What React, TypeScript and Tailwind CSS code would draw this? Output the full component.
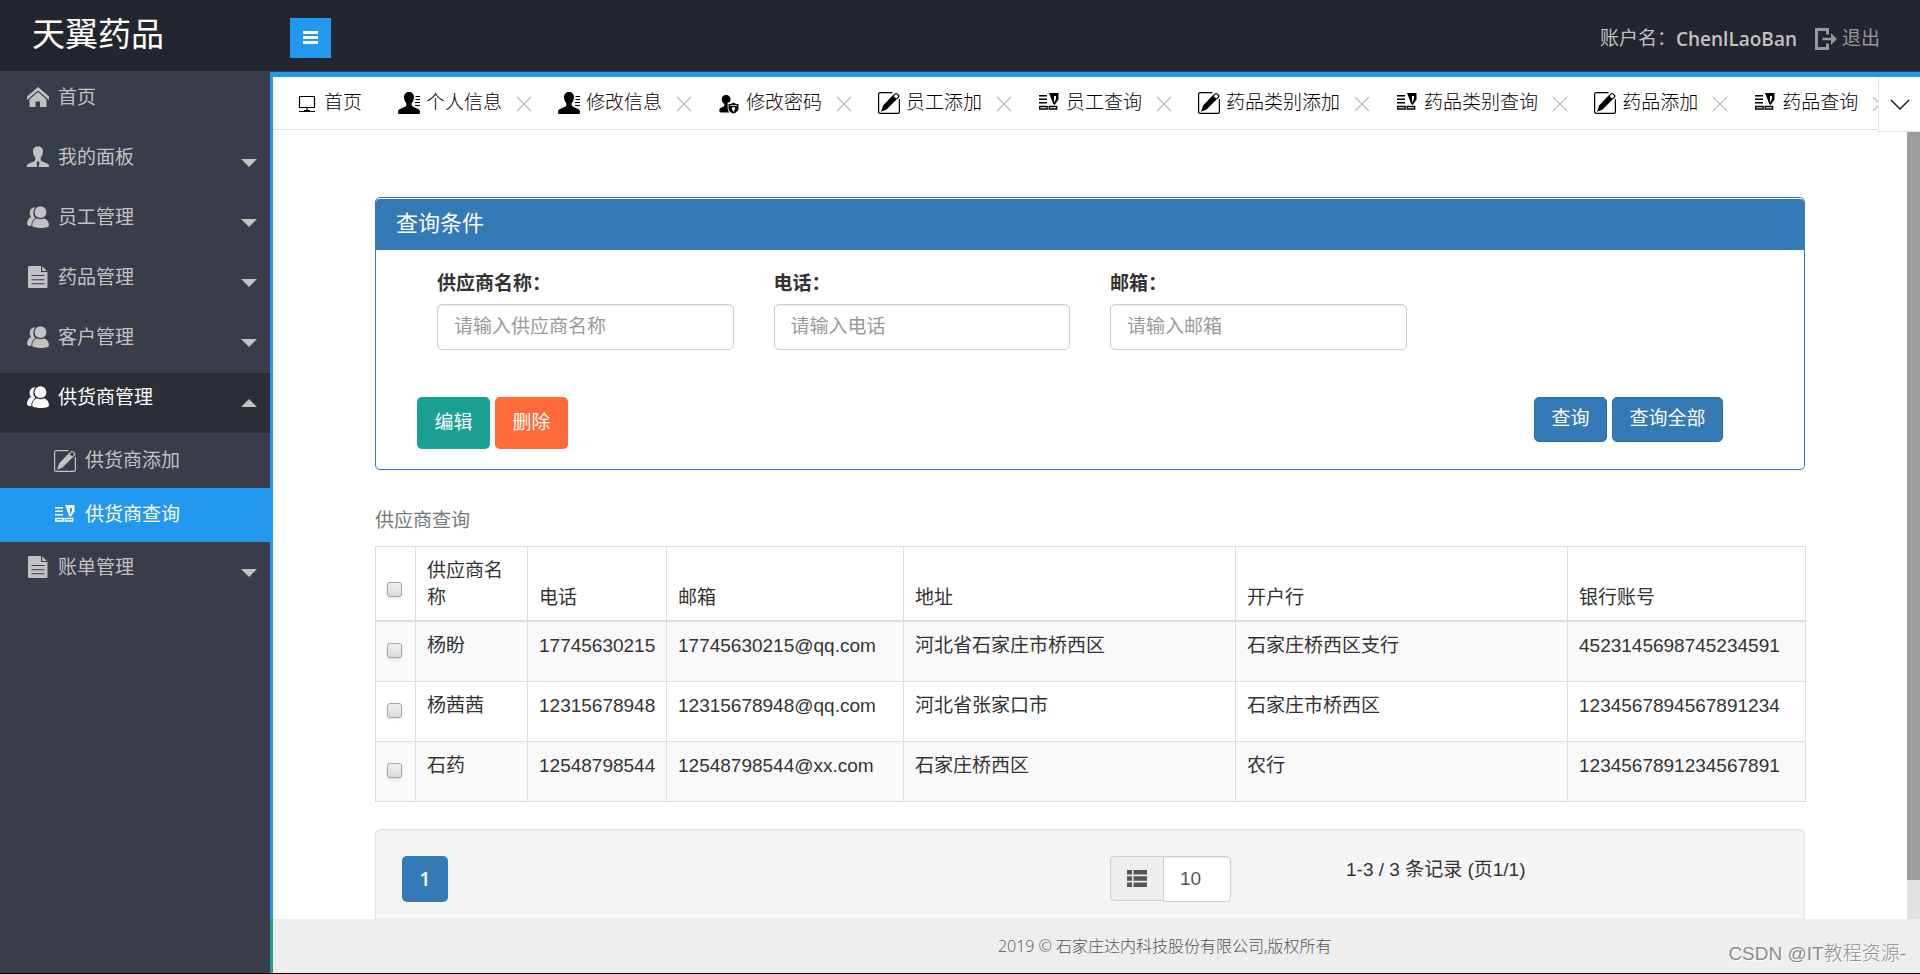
import React from "react";

interface IconProps {
  className?: string;
}

function HomeIcon({ className }: IconProps) {
  return (
    <svg className={className} viewBox="0 0 22 22" fill="currentColor" aria-hidden="true">
      <path d="M11 1 0 10.500V14l11-9.500L22 14v-3.500z" />
      <path d="M11 6 2.500 13.500V21H8.500v-5.500h4.500V21h6.500v-7.500z" />
    </svg>
  );
}

function UserIcon({ className }: IconProps) {
  return (
    <svg className={className} viewBox="0 0 22 22" fill="currentColor" aria-hidden="true">
      <path d="M11 .5c3.500 0 5 2 5 5 0 2.500-.8 4.600-2.300 5.700v2.300c0 1 .5 1.500 1.500 1.900l4.800 2c1.500.6 2 1.400 2 2.600v1H11.800l.6-4.500-1.400-1.500-1.400 1.500.6 4.500H0v-1c0-1.200.5-2 2-2.600l4.800-2c1-.4 1.500-.9 1.500-1.900v-2.300C6.800 10.100 6 8 6 5.500c0-3 1.500-5 5-5z" />
    </svg>
  );
}

function UsersIcon({ className }: IconProps) {
  return (
    <svg className={className} viewBox="0 0 22 22" fill="currentColor" aria-hidden="true">
      <path d="M7.600 1.500C4.500 1.500 2.600 4 2.600 7c0 1.600.5 2.900 1.500 3.900C1.500 12 0 14.500 0 18c0 1.200 1.500 2 4.200 2.200.2-3.900 1.700-6.600 4.300-8.100C7 10.800 6.300 9 6.300 6.800c0-2.100.7-4 2.300-5.200z" />
      <circle cx="13.500" cy="6.200" r="5.900" />
      <path d="M9.800 12.200c1.200.8 2.400 1.100 3.700 1.100s2.600-.3 3.800-1.100c3 1.200 4.700 3.800 4.700 7 0 1.800-3.500 2.800-8.300 2.800-5 0-8.500-1-8.500-2.800 0-3.200 1.700-5.800 4.600-7z" />
    </svg>
  );
}

function FileIcon({ className }: IconProps) {
  return (
    <svg className={className} viewBox="0 0 22 22" fill="currentColor" aria-hidden="true">
      <path
        fillRule="evenodd"
        d="M2.500 0H14v6h6.500v14.500c0 1-.5 1.500-1.500 1.500H2.500C1.500 22 1 21.500 1 20.500v-19C1 .5 1.500 0 2.500 0zM4.500 9v1h13V9zm0 4.200v1h13v-1zm0 4.100v1h13v-1z"
      />
      <path d="M15.200.3 20 4.900h-4.800z" />
    </svg>
  );
}

function EditIcon({ className }: IconProps) {
  return (
    <svg className={className} viewBox="0 0 22 22" aria-hidden="true">
      <path
        d="M14.500.6H2.500C1.200.6.600 1.200.600 2.500v17c0 1.300.6 1.900 1.900 1.900h17c1.300 0 1.900-.6 1.900-1.900V7"
        fill="none"
        stroke="currentColor"
        strokeWidth="1.200"
      />
      <path fill="currentColor" d="m14.800 3.300 4 4L8.600 17.500l-5.500 2.200 2-6.100z" />
      <path
        fill="none"
        stroke="currentColor"
        strokeWidth="1.200"
        d="m15.300 3.800 1.600-1.700c.8-.8 1.600-.8 2.400 0l.9.900c.8.800.8 1.600 0 2.400L18.500 7"
      />
    </svg>
  );
}

function QueryIcon({ className }: IconProps) {
  return (
    <svg className={className} viewBox="0 0 22 22" fill="currentColor" aria-hidden="true">
      <path d="M1 3h8v1.500H1zM1 6.500h8V8H1zM1 10h8v1.500H1z" />
      <path fillRule="evenodd" d="M11 1h9.500v6.500l-4 5.500-1.500-1.500L13 6zm5 3v4.500l.5 2L18 6.500V4z" />
      <path fill="none" stroke="currentColor" strokeWidth="1.300" d="M1.700 14.500h7.500V17H1.700zM11.200 14.500h7.500V17h-7.500z" />
    </svg>
  );
}

function MonitorIcon({ className }: IconProps) {
  return (
    <svg className={className} viewBox="0 0 18 18" fill="none" stroke="currentColor" aria-hidden="true">
      <path d="M1.500 1.500h15v11h-15zM9 12.500v4M1 16.500h16M6 15.500h6" strokeWidth="1.200" />
    </svg>
  );
}

function ProfileIcon({ className }: IconProps) {
  return (
    <svg className={className} viewBox="0 0 22 22" fill="currentColor" aria-hidden="true">
      <path d="M11 0c3.200 0 5 2 5 5 0 2.600-.9 4.700-2.300 6v2c0 1 .5 1.400 1.500 1.800l4.800 2.200c1.500.6 2 1.600 2 3 0 1.500-.3 2-1.500 2h-19C.300 22 0 21.500 0 20c0-1.400.5-2.400 2-3l4.800-2.200c1-.4 1.500-.8 1.500-1.800v-2C6.900 9.700 6 7.600 6 5c0-3 1.800-5 5-5z" />
      <path d="M17.500 4H22v1h-4.500zM17.500 7H22v1h-4.500zM17 10h5v1h-5zM17 13h5v1h-5z" />
    </svg>
  );
}

function PasswordIcon({ className }: IconProps) {
  return (
    <svg className={className} viewBox="0 0 22 22" fill="currentColor" aria-hidden="true">
      <path d="M8 3c2.900 0 4.500 1.700 4.500 4.200 0 1-.3 2-.8 2.800-1 .3-1.700.5-2 .8V16c0 2 .8 3.500 1.600 4.500H3c-1.200 0-1.700-.5-1.700-1.700 0-1.500.6-2.500 2-3.200l2-.9c.8-.4 1-.8 1-1.700v-1C5 11 3.700 9.400 3.700 7.200 3.700 4.700 5.300 3 8 3z" />
      <path
        fillRule="evenodd"
        d="M15.500 10.500c1.500 1 3 1.500 5 1.500v4.500c0 2.500-2 4-5 5-3-1-5-2.500-5-5V12c2 0 3.500-.5 5-1.500zm-3.500 2.800v.8h7v-.8zm3.500 1.700a1.600 1.600 0 0 0-.8 3v1.500h1.600V18a1.600 1.600 0 0 0-.8-3z"
      />
    </svg>
  );
}

function CloseIcon() {
  return (
    <svg className="h-4 w-4" viewBox="0 0 16 16" fill="none" stroke="#c2c2c2" strokeWidth="1.500" aria-hidden="true">
      <path d="m1 1 14 14M15 1 1 15" />
    </svg>
  );
}

const menuItems = [
  { id: "home", label: "首页", icon: HomeIcon },
  { id: "panel", label: "我的面板", icon: UserIcon, children: [] },
  { id: "staff", label: "员工管理", icon: UsersIcon, children: [] },
  { id: "drug", label: "药品管理", icon: FileIcon, children: [] },
  { id: "customer", label: "客户管理", icon: UsersIcon, children: [] },
  {
    id: "supplier",
    label: "供货商管理",
    icon: UsersIcon,
    children: [
      { id: "supplier-add", label: "供货商添加", icon: EditIcon },
      { id: "supplier-query", label: "供货商查询", icon: QueryIcon },
    ],
  },
  { id: "bill", label: "账单管理", icon: FileIcon, children: [] },
];

const tabs = [
  { label: "个人信息", icon: ProfileIcon },
  { label: "修改信息", icon: ProfileIcon },
  { label: "修改密码", icon: PasswordIcon },
  { label: "员工添加", icon: EditIcon },
  { label: "员工查询", icon: QueryIcon },
  { label: "药品类别添加", icon: EditIcon },
  { label: "药品类别查询", icon: QueryIcon },
  { label: "药品添加", icon: EditIcon },
  { label: "药品查询", icon: QueryIcon },
];

const fields = [
  { id: "name", label: "供应商名称：", placeholder: "请输入供应商名称" },
  { id: "phone", label: "电话：", placeholder: "请输入电话" },
  { id: "email", label: "邮箱：", placeholder: "请输入邮箱" },
];

const suppliers = [
  {
    name: "杨盼",
    phone: "17745630215",
    email: "17745630215@qq.com",
    address: "河北省石家庄市桥西区",
    bank: "石家庄桥西区支行",
    account: "4523145698745234591",
  },
  {
    name: "杨茜茜",
    phone: "12315678948",
    email: "12315678948@qq.com",
    address: "河北省张家口市",
    bank: "石家庄市桥西区",
    account: "1234567894567891234",
  },
  {
    name: "石药",
    phone: "12548798544",
    email: "12548798544@xx.com",
    address: "石家庄桥西区",
    bank: "农行",
    account: "1234567891234567891",
  },
];

const checkboxClass =
  "block h-[15px] w-[15px] appearance-none rounded-[3px] border border-[#a6a6a6] bg-linear-to-b from-[#f0f0f0] to-[#dadada] shadow-sm checked:bg-[#337ab7]";

function Header() {
  return (
    <header className="flex h-[72px] shrink-0 items-center border-b border-[#393d49] bg-[#23262e]">
      <h1 className="w-[290px] pb-[2px] pl-8 text-[33px] leading-10 text-white">天翼药品</h1>
      <button aria-label="菜单" className="mt-1 flex h-10 w-[41px] flex-col items-center justify-center gap-[2px] bg-[#2299ee]">
        <span className="h-[3px] w-[15px] bg-white" />
        <span className="h-[3px] w-[15px] bg-white" />
        <span className="h-[3px] w-[15px] bg-white" />
      </button>
      <div className="ml-auto flex items-center pr-10 pt-[6px] text-[19px] leading-7">
        <span className="text-[#c2c2c2]">账户名：</span>
        <span className="font-['Open_Sans','Noto_Sans_CJK_SC',sans-serif] font-semibold text-[#c2c2c2]">ChenlLaoBan</span>
        <a href="#logout" className="ml-[18px] flex items-center gap-[5px] text-[#989898]">
          <svg className="h-[22px] w-[22px]" viewBox="0 0 22 22" fill="currentColor" aria-hidden="true">
            <path d="M0 0h14v6.500h-3V3H3v16h8v-3.500h3V22H0z" />
            <path d="M7.500 9.700H16V5l6 6-6 6v-4.700H7.500z" />
          </svg>
          退出
        </a>
      </div>
    </header>
  );
}

function Sidebar() {
  const [openId, setOpenId] = React.useState("supplier");

  return (
    <nav className="w-[270px] shrink-0 bg-[#393d49] pt-px text-[19px] text-[#c2c2c2]">
      {menuItems.map((item) => {
        const Icon = item.icon;
        const isOpen = item.id === openId;
        return (
          <div key={item.id}>
            <button
              onClick={() => setOpenId(isOpen ? "" : item.id)}
              className={`flex h-[60px] w-full items-center pl-[27px] pr-[13px] text-left ${
                isOpen ? "bg-[#2b2e37] text-white" : ""
              }`}
            >
              <Icon className="mb-3 h-[22px] w-[22px]" />
              <span className="mb-[10px] ml-[9px] leading-7">{item.label}</span>
              {item.children && (
                <svg className="ml-auto h-2 w-4 text-[#c2c2c2]" viewBox="0 0 16 8" fill="currentColor" aria-hidden="true">
                  {isOpen ? <path d="M8 0 16 8H0z" /> : <path d="M0 0h16L8 8z" />}
                </svg>
              )}
            </button>

            {/* Sub menu */}
            {isOpen && (
              <div className="py-px">
                {item.children?.map((child) => {
                  const ChildIcon = child.icon;
                  return (
                    <a
                      key={child.id}
                      href={`#${child.id}`}
                      className={`flex h-[54px] items-center gap-[9px] pl-[54px] leading-7 ${
                        child.id === "supplier-query" ? "bg-[#2299ee] text-white" : ""
                      }`}
                    >
                      <ChildIcon className="h-[22px] w-[22px]" />
                      {child.label}
                    </a>
                  );
                })}
              </div>
            )}
          </div>
        );
      })}
    </nav>
  );
}

function TabBar() {
  return (
    <div className="relative h-[53px] shrink-0 border-b border-[#e2e2e2] bg-white text-[19px] font-light text-black">
      <div className="flex h-full items-center overflow-hidden pl-[25px] pt-px">
        <a href="#home" className="mr-9 flex shrink-0 items-center gap-2">
          <MonitorIcon className="h-[18px] w-[18px]" />
          首页
        </a>
        {tabs.map((tab) => {
          const Icon = tab.icon;
          return (
            <div key={tab.label} className="mr-[26px] flex shrink-0 items-center">
              <a href="#tab" className="flex items-center gap-[6px]">
                <Icon className="mb-[2px] h-[22px] w-[22px]" />
                {tab.label}
              </a>
              <button aria-label={`关闭${tab.label}`} className="ml-[14px]">
                <CloseIcon />
              </button>
            </div>
          );
        })}
      </div>
      <button
        aria-label="更多"
        className="absolute right-0 top-0 flex h-[55px] w-[42px] items-center justify-center border-b border-l border-[#e2e2e2] bg-white"
      >
        <svg className="h-[11px] w-5" viewBox="0 0 20 11" fill="none" stroke="#222" strokeWidth="1.500" aria-hidden="true">
          <path d="m1 1 9 9 9-9" />
        </svg>
      </button>
    </div>
  );
}

function SearchPanel() {
  return (
    <section className="rounded-[5px] border border-[#337ab7] pt-px shadow-xs">
      <h2 className="rounded-t-sm bg-[#337ab7] px-5 pb-3 pt-[11px] text-[22px] leading-7 text-white">查询条件</h2>
      <form className="px-[41px] pb-5 pt-5" onSubmit={(e) => e.preventDefault()}>
        <div className="grid grid-cols-4">
          {fields.map((field) => (
            <div key={field.id} className="px-5">
              <label htmlFor={field.id} className="mb-[7px] block text-[19px] font-bold leading-[27px]">
                {field.label}
              </label>
              <input
                id={field.id}
                type="text"
                placeholder={field.placeholder}
                className="block h-[46px] w-full rounded-[5px] border border-[#cccccc] px-4 text-[19px] shadow-[inset_0_1px_1px_rgba(0,0,0,0.08)] placeholder:text-[#999999]"
              />
            </div>
          ))}
        </div>
        <div className="mt-[47px] flex items-start gap-[5px] text-[19px] text-white">
          <button className="h-[52px] w-[73px] rounded-[5px] bg-[#1aa094]">编辑</button>
          <button className="h-[52px] w-[73px] rounded-[5px] bg-[#ff6a3a]">删除</button>
          <button className="ml-auto h-[45px] w-[73px] rounded-[5px] border border-[#2e6da4] bg-[#337ab7]">查询</button>
          <button className="mr-10 h-[45px] w-[111px] rounded-[5px] border border-[#2e6da4] bg-[#337ab7]">查询全部</button>
        </div>
      </form>
    </section>
  );
}

function SupplierTable() {
  const cell = "border border-[#dddddd] px-[11px] pt-[10px] pb-[22px] align-top";
  const head = "border border-b-2 border-[#dddddd] px-[11px] pt-[10px] pb-[9px] text-left align-bottom font-normal";

  return (
    <table className="w-full table-fixed border-collapse text-[19px] leading-[27px]">
      <caption className="pb-3 pt-[37px] text-left text-[#777777]">供应商查询</caption>
      <colgroup>
        <col className="w-[40px]" />
        <col className="w-[112px]" />
        <col className="w-[139px]" />
        <col className="w-[237px]" />
        <col className="w-[332px]" />
        <col className="w-[332px]" />
        <col className="w-[238px]" />
      </colgroup>
      <thead>
        <tr>
          <th className="border border-b-2 border-[#dddddd] px-[11px] pb-[23px] align-bottom">
            <input type="checkbox" aria-label="全选" className={checkboxClass} />
          </th>
          <th className={head}>供应商名称</th>
          <th className={head}>电话</th>
          <th className={head}>邮箱</th>
          <th className={head}>地址</th>
          <th className={head}>开户行</th>
          <th className={head}>银行账号</th>
        </tr>
      </thead>
      <tbody>
        {suppliers.map((row) => (
          <tr key={row.account} className="odd:bg-[#f9f9f9]">
            <td className="border border-[#dddddd] px-[11px] pt-[21px] align-top">
              <input type="checkbox" aria-label={row.name} className={checkboxClass} />
            </td>
            <td className={cell}>{row.name}</td>
            <td className={cell}>{row.phone}</td>
            <td className={cell}>{row.email}</td>
            <td className={cell}>{row.address}</td>
            <td className={cell}>{row.bank}</td>
            <td className={cell}>{row.account}</td>
          </tr>
        ))}
      </tbody>
    </table>
  );
}

function Pagination() {
  return (
    <div className="mt-[27px] grid grid-cols-2 rounded-[5px] border border-[#e3e3e3] bg-[#f5f5f5] px-[26px] py-[26px] text-[19px] shadow-[inset_0_1px_1px_rgba(0,0,0,0.05)]">
      <div>
        <button className="h-[46px] w-[46px] rounded-[5px] bg-[#337ab7] font-['Open_Sans',sans-serif] font-semibold text-white">
          1
        </button>
      </div>
      <div className="flex items-start pl-5">
        <label
          htmlFor="page-size"
          className="flex h-[45px] w-[53px] items-center justify-center rounded-l-[5px] border border-r-0 border-[#cccccc] bg-[#eeeeee]"
        >
          <svg className="h-[17px] w-5" viewBox="0 0 20 17" fill="#555555" aria-label="每页条数">
            <path d="M0 0h5v4.500H0zM6.500 0H20v4.500H6.500zM0 6.200h5v4.600H0zM6.500 6.200H20v4.600H6.500zM0 12.500h5V17H0zM6.500 12.500H20V17H6.500z" />
          </svg>
        </label>
        <input
          id="page-size"
          type="text"
          defaultValue="10"
          className="h-[46px] w-[68px] rounded-r-[5px] border border-[#cccccc] bg-white px-4 text-[#555555] shadow-[inset_0_1px_1px_rgba(0,0,0,0.08)]"
        />
        <p className="ml-[115px] leading-[27px]">1-3 / 3 条记录 (页1/1)</p>
      </div>
    </div>
  );
}

export default function App() {
  return (
    <div className="flex h-screen flex-col overflow-hidden border-b border-black bg-white font-['Liberation_Sans','Noto_Sans_CJK_SC',sans-serif] text-[#333333]">
      <Header />
      <div className="flex min-h-0 flex-1">
        <Sidebar />
        <div className="flex min-w-0 flex-1 flex-col">
          <main className="flex min-h-0 flex-1 flex-col border-l-[3px] border-t-[5px] border-[#2299ee]">
            <TabBar />
            <div className="flex min-h-0 flex-1">
              <div className="min-w-0 flex-1 overflow-hidden px-[102px] pt-[67px]">
                <SearchPanel />
                <SupplierTable />
                <Pagination />
              </div>
              {/* Scroll track */}
              <div className="w-[13px] shrink-0 bg-[#e1e1e1]">
                <div className="h-[95%] bg-[#9d9d9d]" />
              </div>
            </div>
          </main>
          <footer className="flex h-[54px] shrink-0 items-center border-l-[3px] border-[#1aa094] bg-[#eeeeee]">
            <p className="flex-1 pl-[328px] text-center font-['Open_Sans','Noto_Sans_CJK_SC',sans-serif] text-base font-light text-[#555555]">
              2019 © 石家庄达内科技股份有限公司,版权所有
            </p>
            <span className="mr-[14px] mt-4 text-[19px] font-light leading-6 text-[#8c8c8c] [text-shadow:1px_1px_0_#ffffff]">
              CSDN @IT教程资源-
            </span>
          </footer>
        </div>
      </div>
    </div>
  );
}
